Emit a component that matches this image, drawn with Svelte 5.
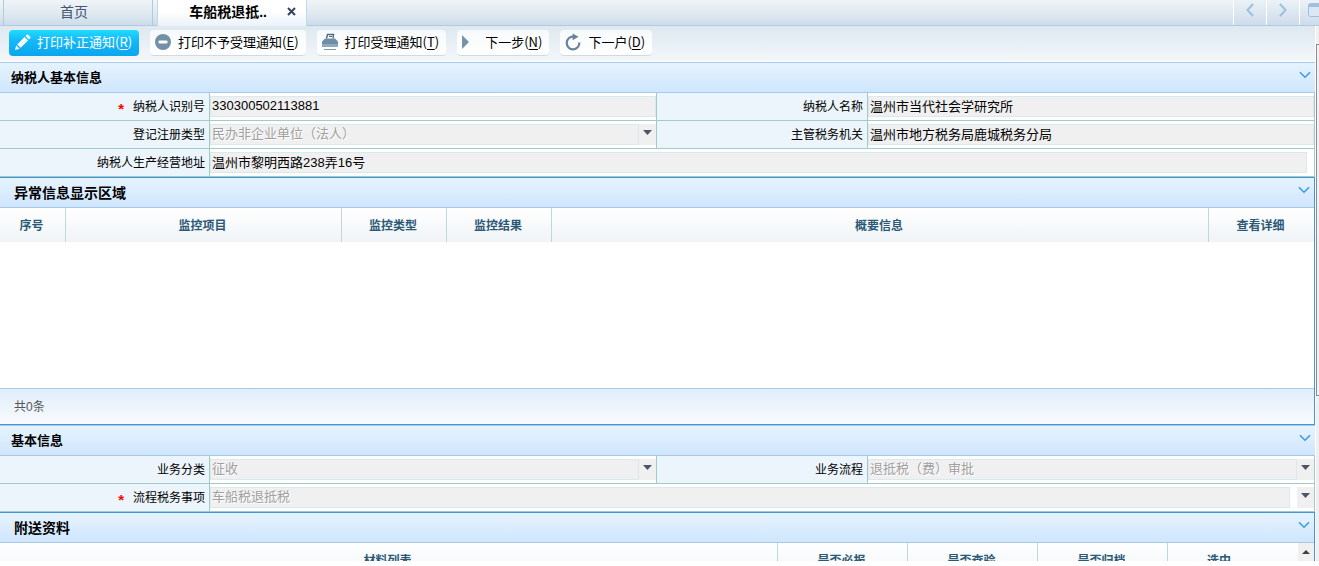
<script>
  const actions = [
    { icon: 'pencil', label: '打印补正通知', key: 'R', primary: true },
    { icon: 'minus', label: '打印不予受理通知', key: 'E' },
    { icon: 'printer', label: '打印受理通知', key: 'T' },
    { icon: 'play', label: '下一步', key: 'N' },
    { icon: 'refresh', label: '下一户', key: 'D' },
  ];
</script>

{#snippet chevron()}
  <button class="fold" aria-label="折叠">
    <svg width="12" height="8" viewBox="0 0 12 8"><path d="M1 1.2 L6 6.2 L11 1.2" fill="none" stroke="#3f9be3" stroke-width="1.6" /></svg>
  </button>
{/snippet}

{#snippet caret()}
  <span class="caret">
    <svg width="9" height="5" viewBox="0 0 9 5"><path d="M0 0H9L4.5 5Z" fill="#4d5666" /></svg>
  </span>
{/snippet}

<div class="app">
  <nav class="tabs">
    <a class="tab" href="#home">首页</a>
    <div class="tab active">
      <a href="#refund">车船税退抵..</a>
      <button class="close" aria-label="关闭">
        <svg width="9" height="9" viewBox="0 0 9 9"><path d="M1 1L8 8M8 1L1 8" stroke="#34435e" stroke-width="2" /></svg>
      </button>
    </div>
    <div class="pager">
      <button aria-label="向左">
        <svg width="8" height="14" viewBox="0 0 8 14"><path d="M7 1L1.5 7L7 13" fill="none" stroke="#9fbfdf" stroke-width="2" /></svg>
      </button>
      <button aria-label="向右">
        <svg width="8" height="14" viewBox="0 0 8 14"><path d="M1 1L6.5 7L1 13" fill="none" stroke="#9fbfdf" stroke-width="2" /></svg>
      </button>
      <button class="win" aria-label="窗口">
        <svg width="16" height="14" viewBox="0 0 16 14"><rect x=".5" y=".5" width="15" height="13" rx="2" fill="#dbe7f2" stroke="#9fbfdf" /><path d="M1 1H15V4H1Z" fill="#9fbfdf" /></svg>
      </button>
    </div>
  </nav>

  <div class="frame">
    <main>
      <div class="toolbar">
        {#each actions as a}
          <button class="action" class:primary={a.primary}>
            <svg width="18" height="18" viewBox="0 0 18 18">
              {#if a.icon === 'pencil'}
                <path d="M2 17L3.2 12.4L6.6 15.8Z" fill="#fff" /><path d="M4.2 11.4L11.6 4L15 7.4L7.6 14.8Z" fill="#fff" /><path d="M12.5 3.1L14 1.6Q14.6 1.2 15.2 1.7L17.3 3.8Q17.8 4.4 17.3 5L15.9 6.5Z" fill="#fff" />
              {:else if a.icon === 'minus'}
                <circle cx="9" cy="9" r="8" fill="#7490a6" /><rect x="4.5" y="7.5" width="9" height="3" rx="1" fill="#fff" />
              {:else if a.icon === 'printer'}
                <path d="M5.5 5.5L6.5 1.5H12.5L12 5.5" fill="#fff" stroke="#4f6678" stroke-width="1.4" /><path d="M8 3.5H11" stroke="#4f6678" /><path d="M4 5.5H14L17 8.5V14H1V8.5Z" fill="#6f8da4" /><path d="M1 11H17V14H1Z" fill="#8eaabd" /><path d="M3 16.5H15" stroke="#7d99ad" />
              {:else if a.icon === 'play'}
                <path d="M1 2L8 9L1 16Z" fill="#7893a8" />
              {:else}
                <path d="M15.3 9.5A6.3 6.3 0 1 1 9.5 3.7" fill="none" stroke="#67829a" stroke-width="2.2" /><path d="M8.6 0.5L14.5 3.8L8.6 7.2Z" fill="#67829a" />
              {/if}
            </svg>
            <span>{a.label}(<u>{a.key}</u>)</span>
          </button>
        {/each}
      </div>

      <section class="form first">
        <header><h2>纳税人基本信息</h2>{@render chevron()}</header>
        <div class="grid">
          <label for="f1"><b>*</b>纳税人识别号</label>
          <div class="cell"><input id="f1" value="330300502113881" readonly /></div>
          <label for="f2">纳税人名称</label>
          <div class="cell"><input id="f2" value="温州市当代社会学研究所" readonly /></div>
          <label for="f3">登记注册类型</label>
          <div class="cell"><select id="f3" disabled><option>民办非企业单位（法人）</option></select>{@render caret()}</div>
          <label for="f4">主管税务机关</label>
          <div class="cell"><input id="f4" value="温州市地方税务局鹿城税务分局" readonly /></div>
          <label for="f5">纳税人生产经营地址</label>
          <div class="cell wide inset"><input id="f5" value="温州市黎明西路238弄16号" readonly /></div>
        </div>
      </section>

      <section class="panel">
        <header><h2>异常信息显示区域</h2>{@render chevron()}</header>
        <table>
          <colgroup><col class="c66" /><col class="c276" /><col class="c105" /><col class="c105" /><col /><col class="c105" /></colgroup>
          <thead>
            <tr><th>序号</th><th>监控项目</th><th>监控类型</th><th>监控结果</th><th>概要信息</th><th>查看详细</th></tr>
          </thead>
        </table>
        <div class="rows"></div>
        <footer>共0条</footer>
      </section>

      <section class="form">
        <header><h2>基本信息</h2>{@render chevron()}</header>
        <div class="grid">
          <label for="g1">业务分类</label>
          <div class="cell"><select id="g1" disabled><option>征收</option></select>{@render caret()}</div>
          <label for="g2">业务流程</label>
          <div class="cell"><select id="g2" disabled><option>退抵税（费）审批</option></select>{@render caret()}</div>
          <label for="g3"><b>*</b>流程税务事项</label>
          <div class="cell wide spaced"><select id="g3" disabled><option>车船税退抵税</option></select>{@render caret()}</div>
        </div>
      </section>

      <section class="panel">
        <header><h2>附送资料</h2>{@render chevron()}</header>
        <div class="scroller">
          <table>
            <colgroup><col /><col class="c130" /><col class="c130" /><col class="c130" /><col class="c130" /></colgroup>
            <thead>
              <tr><th>材料列表</th><th>是否必报</th><th>是否查验</th><th>是否归档</th><th class="pick">选中</th></tr>
            </thead>
          </table>
          <div class="up">
            <svg width="8" height="4" viewBox="0 0 8 4"><path d="M4 0L8 4H0Z" fill="#404040" /></svg>
          </div>
        </div>
      </section>
    </main>
    <div class="scrollbar"><div class="thumb"></div></div>
  </div>
</div>

<style>
  :global(body) {
    margin: 0;
    background: #fff;
  }
  .app {
    height: calc(100vh - 5px);
    display: flex;
    flex-direction: column;
    overflow: hidden;
    font: 12px/18px "Liberation Sans", "Noto Sans CJK SC", sans-serif;
    color: #000;
  }
  .app * {
    box-sizing: border-box;
  }
  button {
    font: inherit;
    border: 0;
    padding: 0;
    background: none;
  }
  a {
    color: inherit;
    text-decoration: none;
  }

  .tabs {
    flex: none;
    height: 26px;
    display: flex;
    gap: 4px;
    padding-left: 3px;
    border-bottom: 1px solid #b0cae2;
    background: linear-gradient(#f0f4f8, #dfe9f0 55%, #cddcea);
    font-size: 14px;
    line-height: 24px;
  }
  .tab {
    width: 150px;
    border: solid #b5c9da;
    border-width: 0 1px;
    text-align: center;
    color: #45546f;
    padding-right: 8px;
  }
  .tab.active {
    height: 26px;
    display: flex;
    align-items: center;
    justify-content: flex-end;
    gap: 20px;
    padding: 0 10px 2px 0;
    border-color: #c3d8ea;
    background: linear-gradient(#fff 40%, #ecf3f9);
    color: #000;
    font-weight: bold;
  }
  .close {
    display: flex;
    padding-bottom: 2px;
  }
  .pager {
    margin-left: auto;
    display: flex;
  }
  .pager button {
    width: 33px;
    display: flex;
    justify-content: center;
    align-items: flex-start;
    padding-top: 3px;
    border-left: 1px solid #fff;
    background: linear-gradient(#ecf2f7, #cddceb);
  }
  .pager .win {
    width: 20px;
    justify-content: flex-start;
    padding-left: 8px;
    overflow: hidden;
  }
  .win svg {
    flex: none;
  }

  .frame {
    flex: 1;
    min-height: 0;
    display: flex;
    gap: 1px;
  }
  main {
    flex: 1;
    min-width: 0;
    overflow: hidden;
  }
  .scrollbar {
    width: 3px;
    padding-top: 18px;
    background: #f0f0f0;
  }
  .thumb {
    height: 68%;
    border: 1px solid #8c8c8c;
    border-right: 0;
    background: #f2f2f2;
  }

  .toolbar {
    height: 36px;
    display: flex;
    gap: 11px;
    padding: 4px 9px 5px;
    border-bottom: 1px solid #fff;
    background: linear-gradient(#dde8f0, #f3f7fa);
  }
  .action {
    display: flex;
    align-items: center;
    gap: 6px;
    padding: 0 7px 1px 4px;
    border-radius: 4px;
    border-bottom: 1px solid #d5d8de;
    background: linear-gradient(#f7fafc, #fff);
    font: 13px/20px "Noto Sans CJK SC", sans-serif;
    white-space: nowrap;
    color: #000;
  }
  .action.primary {
    padding-bottom: 2px;
    border: 0;
    background: linear-gradient(#1fdcff, #14b9f8 40%, #0aa6ee);
    color: #fff;
  }
  u {
    text-underline-offset: 2px;
  }

  header {
    height: 30px;
    display: flex;
    justify-content: space-between;
    border-bottom: 1px solid #a5c9e9;
    background: linear-gradient(#e6f3ff, #cfe6fd);
  }
  h2 {
    margin: 0;
    padding-left: 11px;
    font-size: 13px;
    line-height: 29px;
  }
  .fold {
    display: flex;
    padding: 8px 4px;
  }
  .form header {
    height: 31px;
    border-top: 1px solid #a5c9e9;
  }
  .grid {
    display: grid;
    grid-template-columns: 210px 1fr 211px 1fr;
    grid-auto-rows: 28px;
  }
  .grid label,
  .cell {
    border: solid #a3cbc6;
    border-width: 0 1px 1px 0;
  }
  .grid label {
    padding: 1px 4px 0 0;
    text-align: right;
    line-height: 27px;
    background: #edf5fc;
  }
  .grid b {
    margin-right: 9px;
    font-size: 15px;
    line-height: 12px;
    vertical-align: -3px;
    color: #f00;
  }
  .cell {
    min-width: 0;
    display: flex;
    padding: 3px 0;
  }
  .cell.wide {
    grid-column: 2 / -1;
  }
  .cell.inset {
    padding-right: 7px;
  }
  .cell.spaced {
    gap: 7px;
  }
  input,
  select {
    flex: 1;
    min-width: 0;
    height: 21px;
    margin: 0;
    padding: 0 1px 2px;
    appearance: none;
    border: 1px solid #dae8ef;
    border-radius: 0;
    background: #f0f0f0;
    font: 13px/18px "Liberation Sans", "Noto Sans CJK SC", sans-serif;
    color: #000;
    outline: 0;
  }
  select:disabled {
    opacity: 1;
    color: #a0a0a0;
    text-shadow: 1px 1px #fff;
  }
  .caret {
    width: 17px;
    display: flex;
    justify-content: center;
    padding-top: 6px;
    background: #f0f0f0;
  }

  .panel {
    border: solid #3f98dc;
    border-width: 1px 1px 1px 0;
  }
  .panel h2 {
    padding: 1px 0 0 14px;
    font-size: 14px;
    line-height: 28px;
  }
  table {
    width: 100%;
    table-layout: fixed;
    border-collapse: separate;
    border-spacing: 0;
    background: linear-gradient(#fff, #f0f4f7);
  }
  th {
    height: 34px;
    padding: 2px 2px 0 0;
    border-right: 1px solid #bfd9d8;
    color: #2b5876;
  }
  th:last-child {
    border-right: 0;
  }
  .c66 {
    width: 66px;
  }
  .c276 {
    width: 276px;
  }
  .c105 {
    width: 105px;
  }
  .c130 {
    width: 130px;
  }
  .rows {
    height: 146px;
  }
  footer {
    height: 36px;
    padding: 1px 0 0 14px;
    border-top: 1px solid #a9cbea;
    background: linear-gradient(#e0edfa, #f8fbfe);
    line-height: 35px;
    color: #555;
  }
  .scroller {
    display: flex;
  }
  .scroller th.pick {
    padding-right: 28px;
  }
  .up {
    flex: none;
    width: 16px;
    display: flex;
    justify-content: center;
    padding-top: 7px;
    background: #f0f0f0;
  }
</style>
